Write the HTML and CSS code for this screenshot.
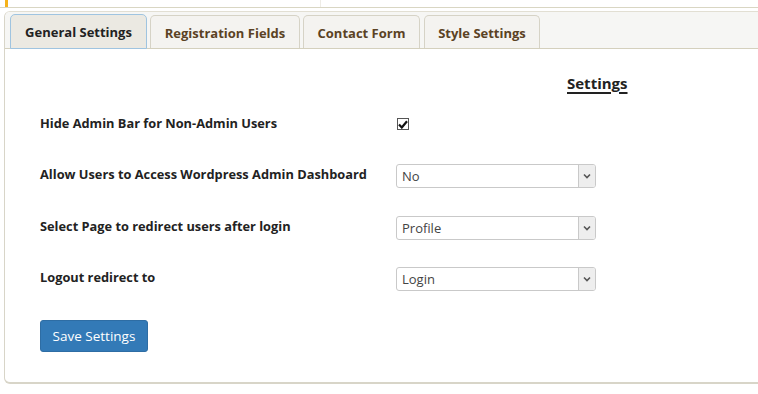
FILE: index.html
```html
<!DOCTYPE html>
<html>
<head>
<meta charset="utf-8">
<link rel="stylesheet" href="styles.css">
</head>
<body>
<div class="topbar">
  <div class="marker"></div>
  <div class="topseg"></div>
</div>
<div class="panel">
  <div class="tabs">
    <div class="tab active">General Settings</div>
    <div class="tab">Registration Fields</div>
    <div class="tab">Contact Form</div>
    <div class="tab">Style Settings</div>
  </div>
  <div class="body">
    <div class="heading">Settings</div>
    <div class="row">
      <div class="label">Hide Admin Bar for Non-Admin Users</div>
      <div class="control"><span class="check"><svg width="10" height="9" viewBox="0 0 10 9"><path d="M1 4.5 L3.8 7.5 L9 1.2" fill="none" stroke="#111" stroke-width="2.2"/></svg></span></div>
    </div>
    <div class="row">
      <div class="label">Allow Users to Access Wordpress Admin Dashboard</div>
      <div class="control"><div class="select"><span class="val">No</span><span class="arrow"><svg width="8" height="6" viewBox="0 0 8 6"><path d="M1 1.5 L4 4.5 L7 1.5" fill="none" stroke="#555" stroke-width="1.6"/></svg></span></div></div>
    </div>
    <div class="row">
      <div class="label">Select Page to redirect users after login</div>
      <div class="control"><div class="select"><span class="val">Profile</span><span class="arrow"><svg width="8" height="6" viewBox="0 0 8 6"><path d="M1 1.5 L4 4.5 L7 1.5" fill="none" stroke="#555" stroke-width="1.6"/></svg></span></div></div>
    </div>
    <div class="row">
      <div class="label">Logout redirect to</div>
      <div class="control"><div class="select"><span class="val">Login</span><span class="arrow"><svg width="8" height="6" viewBox="0 0 8 6"><path d="M1 1.5 L4 4.5 L7 1.5" fill="none" stroke="#555" stroke-width="1.6"/></svg></span></div></div>
    </div>
    <button class="save">Save Settings</button>
  </div>
</div>
</body>
</html>
```
FILE: styles.css
```css
html, body {
  margin: 0;
  padding: 0;
  background: #fff;
  width: 758px;
  height: 394px;
  overflow: hidden;
  font-family: "Open Sans", "DejaVu Sans", sans-serif;
}
.topbar {
  height: 7px;
  border-bottom: 1px solid #d9d6c3;
  display: flex;
}
.marker {
  width: 3px;
  height: 7px;
  background: #f5b21a;
  margin-left: 5px;
}
.topseg {
  width: 1px;
  height: 7px;
  background: #eeece6;
  margin-left: 312px;
}
.panel {
  margin: 3px 0 0 4px;
  height: 370px;
  border-left: 1px solid #d8d5c8;
  border-top: 1px solid #e2dfd3;
  border-bottom: 2px solid #d8d5c8;
  border-radius: 6px 0 0 6px;
  overflow: hidden;
}
.tabs {
  background: #f6f6f4;
  height: 36px;
  border-bottom: 1px solid #d4d0bd;
  display: flex;
  align-items: flex-end;
  padding-left: 5px;
  gap: 3px;
}
.tab {
  height: 33px;
  box-sizing: border-box;
  border: 1px solid #d6d3c6;
  border-bottom: none;
  border-radius: 5px 5px 0 0;
  background: #f4f3f0;
  color: #5b4224;
  font-weight: bold;
  font-size: 13px;
  display: flex;
  align-items: center;
  justify-content: center;
  padding: 1px 0 0 0;
  white-space: nowrap;
}
.tab:nth-child(1) { width: 137px; }
.tab:nth-child(2) { width: 150px; }
.tab:nth-child(3) { width: 117px; }
.tab:nth-child(4) { width: 116px; margin-left: 1px; }
.tab.active {
  background: #ebe9e2;
  border: 1px solid #9fc4e0;
  color: #222;
  height: 35px;
  margin-bottom: -1px;
}
.body {
  padding: 24px 0 0 35px;
}
.heading {
  margin-left: 527px;
  font-size: 15px;
  font-weight: bold;
  color: #222;
  text-decoration: underline;
  text-decoration-thickness: 2px;
  text-underline-offset: 3px;
  line-height: 20px;
}
.row {
  display: flex;
  align-items: flex-start;
  height: 52px;
}
.row:nth-of-type(2) { margin-top: 22px; height: 51px; }
.row:nth-of-type(4) { height: 51px; }
.row:nth-of-type(5) { height: 51px; }
.label {
  width: 356px;
  font-size: 12.8px;
  font-weight: bold;
  color: #222;
  line-height: 16px;
}
.check {
  display: flex;
  width: 12px;
  height: 12px;
  box-sizing: border-box;
  border: 1px solid #555;
  margin-top: 3px;
  margin-left: 1px;
  align-items: center;
  justify-content: center;
  background: #fff;
}
.select {
  width: 200px;
  height: 24px;
  box-sizing: border-box;
  border: 1px solid #c9c9c9;
  border-radius: 3px;
  display: flex;
  margin-top: -2px;
  background: #fff;
}
.val {
  flex: 1;
  font-family: "Open Sans", sans-serif;
  font-size: 13px;
  color: #444;
  line-height: 22px;
  padding-left: 5px;
}
.arrow {
  width: 16px;
  background: #eeeeee;
  border-left: 1px solid #c9c9c9;
  display: flex;
  align-items: center;
  justify-content: center;
  border-radius: 0 2px 2px 0;
}
.save {
  display: block;
  width: 108px;
  height: 32px;
  background: #337ab7;
  border: 1px solid #2e6da4;
  border-radius: 3px;
  color: #fff;
  font-family: "Open Sans", sans-serif;
  font-size: 13.5px;
  padding: 0;
}
```
